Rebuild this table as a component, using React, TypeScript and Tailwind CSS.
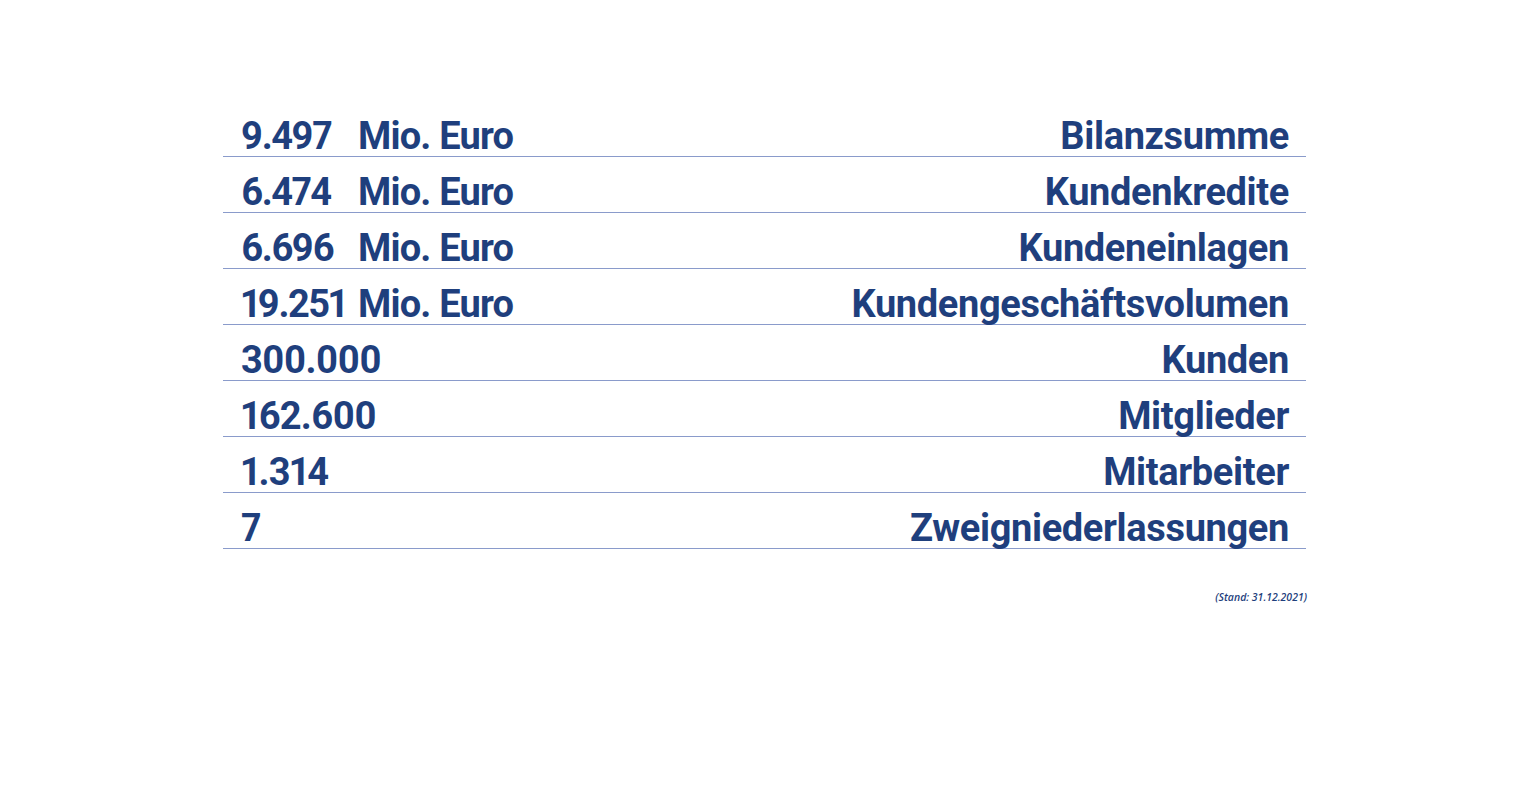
const rows = [
  { value: "9.497", unit: "Mio. Euro", label: "Bilanzsumme" },
  { value: "6.474", unit: "Mio. Euro", label: "Kundenkredite" },
  { value: "6.696", unit: "Mio. Euro", label: "Kundeneinlagen" },
  { value: "19.251", unit: "Mio. Euro", label: "Kundengeschäftsvolumen" },
  { value: "300.000", unit: "", label: "Kunden" },
  { value: "162.600", unit: "", label: "Mitglieder" },
  { value: "1.314", unit: "", label: "Mitarbeiter" },
  { value: "7", unit: "", label: "Zweigniederlassungen" },
];

export default function App() {
  return (
    <div className="w-[1536px] h-[785px] bg-white pt-[101px]">
      <div className="ml-[223px] w-[1083px] text-[#1f3f7d] font-['Roboto',sans-serif]">
        {rows.map((r) => (
          <div
            key={r.label}
            className="h-[56px] flex items-end justify-between border-b border-[#8a9bcb] px-[18px] pb-[1px] text-[38px] font-bold leading-none"
          >
            <div className="flex whitespace-nowrap tracking-[-0.8px]">
              <span className={r.unit ? "w-[117px] proportional-nums tracking-[-1.5px]" : "proportional-nums"}>{r.value}</span>
              {r.unit && <span>{r.unit}</span>}
            </div>
            <span className="-mr-[1px] tracking-[-0.35px]">{r.label}</span>
          </div>
        ))}
        <div className="mt-[41px] text-right text-[10.5px] italic font-['Open_Sans',sans-serif] font-semibold -mr-[1px]">
          (Stand: 31.12.2021)
        </div>
      </div>
    </div>
  );
}
